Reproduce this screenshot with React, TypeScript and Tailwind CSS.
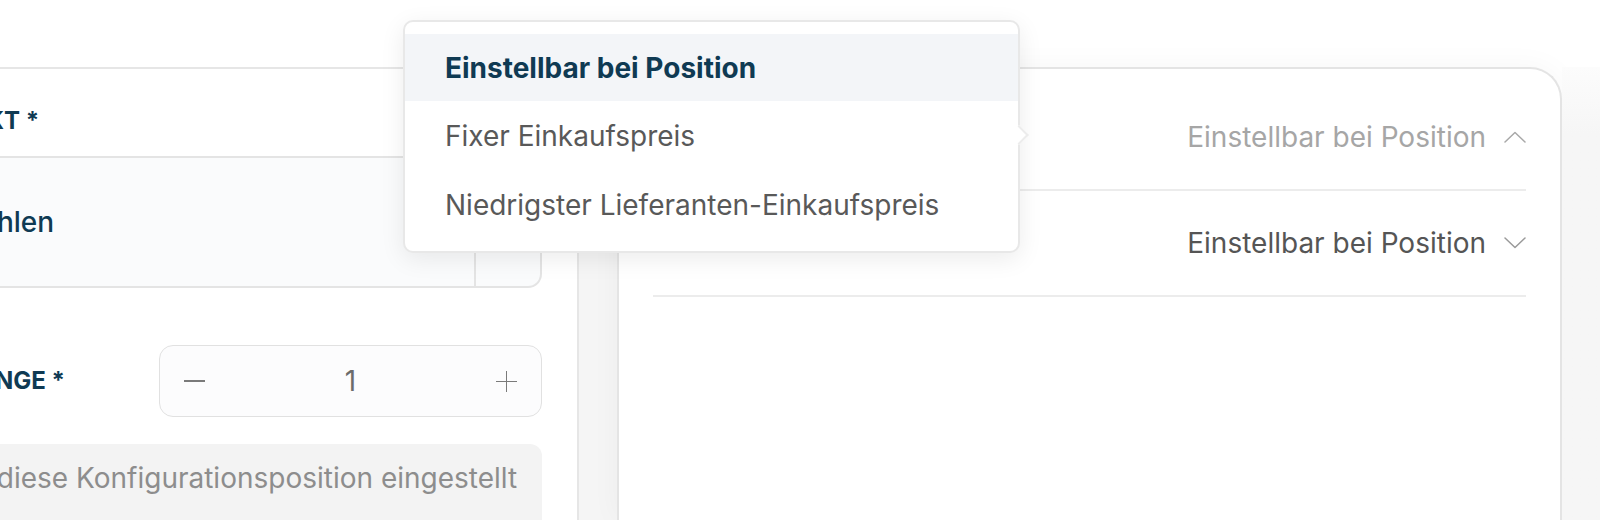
import { useState } from "react";

const OPTIONS = [
  "Einstellbar bei Position",
  "Fixer Einkaufspreis",
  "Niedrigster Lieferanten-Einkaufspreis",
] as const;

const NAVY = "text-[#0f3a53]";

function Chevron({ up, className }: { up?: boolean; className?: string }) {
  return (
    <svg width="22" height="12" viewBox="0 0 22 12" fill="none" className={className}>
      <polyline
        points={up ? "1,11 11,1.5 21,11" : "1,1 11,10.5 21,1"}
        stroke="currentColor"
        strokeWidth="1.5"
        strokeLinecap="round"
        strokeLinejoin="round"
      />
    </svg>
  );
}

function Stepper({ value }: { value: number }) {
  return (
    <div className="flex h-[72px] w-[383px] items-center justify-between rounded-[14px] border border-[#e1e1e1] bg-[#fcfcfd] px-[24px] text-[#6b6b6b]">
      <span className="block h-[1.5px] w-[21px] bg-[#7a7a7a]" />
      <span className="text-[28px] leading-none">{value}</span>
      <span className="relative block h-[21px] w-[21px]">
        <span className="absolute left-0 top-[10px] h-[1.5px] w-[21px] bg-[#7a7a7a]" />
        <span className="absolute left-[10px] top-0 h-[21px] w-[1.5px] bg-[#7a7a7a]" />
      </span>
    </div>
  );
}

function PriceRow({ label, value, open }: { label: string; value: string; open?: boolean }) {
  return (
    <div className="flex h-[106px] items-center justify-between border-b-2 border-[#ececec]">
      <span className="mb-[12px] text-[26px] text-[#555]">{label}</span>
      <div className="flex items-center gap-[18px]">
        <span className={open ? "text-[28px] text-[#a6a6a6]" : "text-[28px] text-[#555]"}>{value}</span>
        <Chevron up={open} className={open ? "text-[#a8a8a8]" : "text-[#9a9a9a]"} />
      </div>
    </div>
  );
}

export default function App() {
  const [selected] = useState(0);

  return (
    <div className="relative h-[520px] w-[1600px] overflow-hidden bg-white font-['Inter','Noto_Sans',sans-serif]">
      <div className="mt-[67px] flex h-[453px]">
        {/* left: product + quantity */}
        <div className="ml-[-120px] w-[699px] shrink-0 border-r-2 border-t-2 border-[#e6e6e6] bg-white pr-[35px]">
          <div className={`pl-[22px] pt-[36px] text-[24px] font-bold leading-[32px] ${NAVY}`}>PRODUKT *</div>
          <div className="mt-[19px] flex h-[132px] rounded-br-[14px] border-b-2 border-r-2 border-t-2 border-[#e4e4e4] bg-[#fafbfc]">
            <div className={`flex flex-1 items-center text-[28px] font-medium ${NAVY}`}>
              <span className="ml-[-82px]">Produkt auswählen</span>
            </div>
            <div className="w-[66px] border-l-2 border-[#e4e4e4]" />
          </div>
          <div className="mt-[57px] flex items-center justify-between">
            <span className={`pl-[78px] text-[24px] font-bold ${NAVY}`}>MENGE *</span>
            <Stepper value={1} />
          </div>
          <div className="mt-[27px] h-[120px] rounded-tr-[12px] bg-[#f3f3f3] pl-[2px] pt-[14px] text-[28px] leading-[40px] text-[#8d8d8d]">
            Wird für diese Konfigurationsposition eingestellt
          </div>
        </div>

        <div className="w-[38px] shrink-0 bg-[#f5f5f5]" />

        {/* right: price settings */}
        <div className="w-[945px] shrink-0 rounded-t-[32px] border-2 border-b-0 border-[#e4e4e4] bg-white px-[34px] pt-[16px] shadow-[0_0_30px_rgba(0,0,0,0.04)]">
          <PriceRow label="Einkaufspreis-Ermittlung" value="Einstellbar bei Position" open />
          <PriceRow label="Verkaufspreis (Typ, Gruppe)" value="Einstellbar bei Position" />
        </div>

        <div className="flex-1 bg-gradient-to-b from-[#fcfcfc] to-[#f6f6f6] to-[15%]" />
      </div>

      {/* open dropdown */}
      <div className="absolute left-[403px] top-[20px] w-[617px] rounded-[10px] border-2 border-[#e8e8e8] bg-white pb-[12px] pt-[12px] shadow-[0_6px_24px_rgba(0,0,0,0.08)]">
        {OPTIONS.map((opt, i) => (
          <div
            key={opt}
            className={
              i === selected
                ? `flex h-[67px] items-center bg-[#f3f5f8] px-[40px] text-[28px] font-bold ${NAVY}`
                : "flex h-[69px] items-center px-[40px] text-[28px] text-[#595959]"
            }
          >
            {opt}
          </div>
        ))}
        <span className="absolute right-[-8px] top-[106px] block h-[14px] w-[14px] rotate-45 border-r-2 border-t-2 border-[#ececec] bg-white" />
      </div>
    </div>
  );
}
